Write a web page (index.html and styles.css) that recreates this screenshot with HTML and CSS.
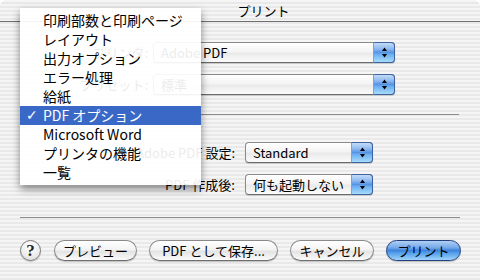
FILE: index.html
```html
<!DOCTYPE html>
<html lang="ja">
<head>
    <meta charset="UTF-8">
    <link rel="stylesheet" href="styles.css">
    <title>プリント</title>
</head>
<body>
    <div class="window">
        <div class="titlebar">プリント</div>
        <div class="sheet">
            <!-- プリンタとプリセット -->
            <div class="field top-field">
                <span class="label">プリンタ:</span>
                <div class="popup wide">
                    <span class="value">Adobe PDF</span>
                    <span class="arrows"><svg width="7" height="13" viewBox="0 0 7 13"><polygon points="1,5 3.5,1.5 6,5"/><polygon points="1,8 3.5,11.5 6,8"/></svg></span>
                </div>
            </div>
            <div class="field">
                <span class="label">プリセット:</span>
                <div class="popup wide">
                    <span class="value">標準</span>
                    <span class="arrows"><svg width="7" height="13" viewBox="0 0 7 13"><polygon points="1,5 3.5,1.5 6,5"/><polygon points="1,8 3.5,11.5 6,8"/></svg></span>
                </div>
            </div>
            <div class="separator sep-first"></div>
            <!-- PDFオプション -->
            <div class="field option-field first-option">
                <span class="label">Adobe PDF 設定:</span>
                <div class="popup narrow">
                    <span class="value">Standard</span>
                    <span class="arrows"><svg width="7" height="13" viewBox="0 0 7 13"><polygon points="1,5 3.5,1.5 6,5"/><polygon points="1,8 3.5,11.5 6,8"/></svg></span>
                </div>
            </div>
            <div class="field option-field">
                <span class="label">PDF 作成後:</span>
                <div class="popup narrow">
                    <span class="value">何も起動しない</span>
                    <span class="arrows"><svg width="7" height="13" viewBox="0 0 7 13"><polygon points="1,5 3.5,1.5 6,5"/><polygon points="1,8 3.5,11.5 6,8"/></svg></span>
                </div>
            </div>
            <div class="separator sep-second"></div>
            <!-- ボタン -->
            <div class="buttons">
                <button class="help" type="button">?</button>
                <button class="btn btn-preview" type="button">プレビュー</button>
                <button class="btn btn-save" type="button">PDF として保存...</button>
                <button class="btn btn-cancel" type="button">キャンセル</button>
                <button class="btn btn-print default" type="button">プリント</button>
            </div>
        </div>
        <!-- パネル選択メニュー -->
        <ul class="menu">
            <li>印刷部数と印刷ページ</li>
            <li>レイアウト</li>
            <li>出力オプション</li>
            <li>エラー処理</li>
            <li>給紙</li>
            <li class="selected"><span class="check">✓</span>PDF オプション</li>
            <li>Microsoft Word</li>
            <li>プリンタの機能</li>
            <li>一覧</li>
        </ul>
    </div>
</body>
</html>
```

FILE: styles.css
```css
body {
    margin: 0;
    background: #fff;
    font-family: "Noto Sans CJK JP", sans-serif;
    color: #000;
}
.window {
    position: relative;
    width: 480px;
    height: 280px;
    overflow: hidden;
    border-radius: 6px 6px 0 0;
    background: repeating-linear-gradient(to bottom, #f5f5f5 0, #f5f5f5 2px, #e9e9e9 2px, #e9e9e9 4px);
}
/* タイトルバー */
.titlebar {
    height: 21px;
    border-bottom: 1px solid #6e6e6e;
    padding-left: 47px;
    text-align: center;
    font-size: 13px;
    line-height: 21px;
}
/* 各行 */
.field {
    display: flex;
    align-items: center;
    margin-top: 11px;
}
.top-field {
    margin-top: 20px;
}
.label {
    font-size: 13px;
    line-height: 21px;
    text-align: right;
    white-space: nowrap;
}
.field .label {
    width: 128px;
    margin-left: 20px;
    margin-right: 5px;
}
.option-field .label {
    width: 215px;
    margin-right: 10px;
}
.first-option {
    margin-top: 27px;
}
/* ポップアップボタン */
.popup {
    display: flex;
    box-sizing: border-box;
    height: 21px;
    border: 1px solid #8a8a8a;
    border-bottom-color: #6a6a6a;
    border-radius: 4px;
    background: linear-gradient(to bottom, #ffffff 0%, #f4f4f4 45%, #eaeaea 55%, #fbfbfb 100%);
    box-shadow: 0 1px 1px rgba(0, 0, 0, 0.15);
}
.wide {
    width: 242px;
}
.narrow {
    width: 128px;
}
.value {
    flex: 1;
    padding-left: 7px;
    font-size: 13px;
    line-height: 19px;
    white-space: nowrap;
    overflow: hidden;
}
.arrows {
    display: flex;
    align-items: center;
    justify-content: center;
    width: 20px;
    margin: -1px -1px -1px 0;
    border: 1px solid #3f62a0;
    border-left-color: #7aa2d8;
    border-radius: 0 4px 4px 0;
    background: linear-gradient(to bottom, #c4dcf6 0%, #8fbaf0 30%, #5694e4 50%, #6aaef0 60%, #a9dcfc 100%);
}
.arrows svg {
    fill: #000;
}
/* 区切り線 */
.separator {
    width: 439px;
    margin-left: 20px;
    border-top: 1px solid #8c8c8c;
}
.sep-first {
    margin-top: 19px;
}
.sep-second {
    margin-top: 22px;
    width: 440px;
}
/* ボタン */
.buttons {
    display: flex;
    align-items: center;
    margin: 22px 0 0 20px;
    gap: 12px;
}
.btn {
    box-sizing: border-box;
    height: 21px;
    padding: 0;
    border: 1px solid #8a8a8a;
    border-bottom-color: #6e6e6e;
    border-radius: 11px;
    background: linear-gradient(to bottom, #ffffff 0%, #f3f3f3 45%, #e4e4e4 55%, #fafafa 100%);
    box-shadow: 0 1px 1px rgba(0, 0, 0, 0.2);
    font-family: "Noto Sans CJK JP", sans-serif;
    font-size: 13px;
    line-height: 19px;
    color: #000;
}
.help {
    box-sizing: border-box;
    width: 21px;
    height: 21px;
    padding: 0;
    margin-right: 1px;
    border: 1px solid #7a7a7a;
    border-radius: 50%;
    background: radial-gradient(circle at 50% 30%, #ffffff 0%, #f0f0f0 50%, #d8d8d8 100%);
    box-shadow: 0 1px 1px rgba(0, 0, 0, 0.2);
    font-family: "Liberation Serif", serif;
    font-weight: bold;
    font-size: 17px;
    line-height: 19px;
    color: #222;
}
.btn-preview {
    width: 83px;
}
.btn-save {
    width: 129px;
}
.btn-cancel {
    width: 84px;
}
.btn-print {
    width: 75px;
}
.default {
    border-color: #243f7c;
    background: linear-gradient(to bottom, #b0d0f4 0%, #74a8ea 35%, #3f84dc 50%, #56a2ec 65%, #9fd3fc 100%);
}
/* プルダウンメニュー */
.menu {
    position: absolute;
    left: 20px;
    top: 8px;
    width: 181px;
    margin: 0;
    padding: 3px 0;
    list-style: none;
    background: rgba(255, 255, 255, 0.92);
    box-shadow: 0 4px 8px rgba(0, 0, 0, 0.45);
}
.menu li {
    position: relative;
    height: 19px;
    padding-left: 23px;
    font-size: 14px;
    line-height: 19px;
    white-space: nowrap;
}
.menu .selected {
    background: #3a68c6;
    color: #fff;
}
.check {
    position: absolute;
    left: 6px;
    top: 0;
    font-family: "DejaVu Sans", sans-serif;
    font-weight: bold;
    font-size: 14px;
}
```
